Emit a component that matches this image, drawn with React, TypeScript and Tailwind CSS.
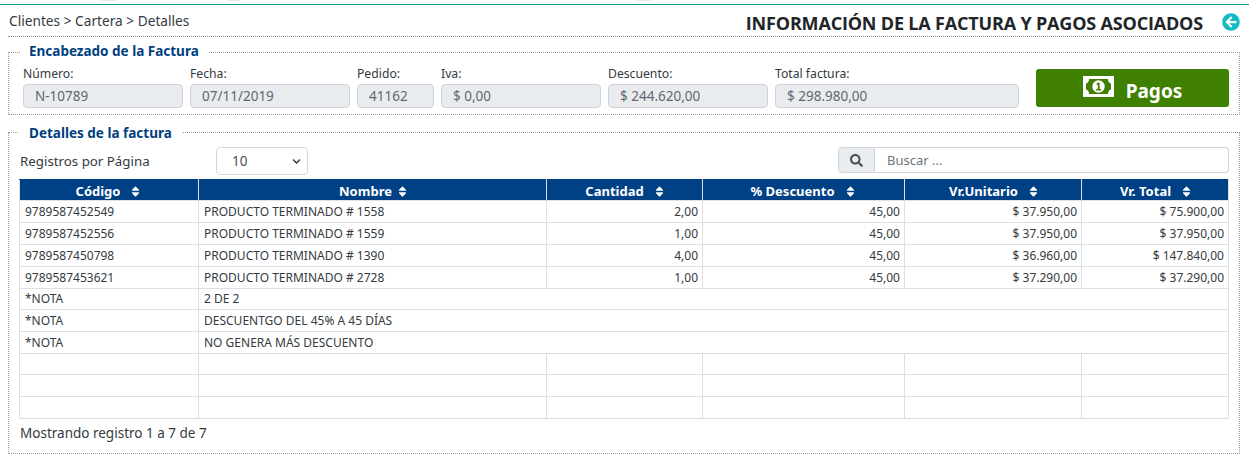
import React from "react";
import { FaSearch, FaArrowCircleLeft, FaSort, FaChevronDown } from "react-icons/fa";

const fields = [
  { label: "Número:", value: "N-10789", w: "w-[160px]" },
  { label: "Fecha:", value: "07/11/2019", w: "w-[160px]" },
  { label: "Pedido:", value: "41162", w: "w-[77px]" },
  { label: "Iva:", value: "$ 0,00", w: "w-[160px]" },
  { label: "Descuento:", value: "$ 244.620,00", w: "w-[160px]" },
  { label: "Total factura:", value: "$ 298.980,00", w: "w-[244px]" },
];

const headers = [
  { t: "Código", w: "w-[179px]", gap: "ml-[9px]", pad: "pl-[0px]" },
  { t: "Nombre", w: "w-[348px]", gap: "ml-[4px]", pad: "pl-[3px]" },
  { t: "Cantidad", w: "w-[156px]", gap: "ml-[9px]", pad: "pl-[2px]" },
  { t: "% Descuento", w: "w-[202px]", gap: "ml-[9px]", pad: "pl-[0px]" },
  { t: "Vr.Unitario", w: "w-[177px]", gap: "ml-[9px]", pad: "pl-[3px]" },
  { t: "Vr. Total", w: "w-[147px]", gap: "ml-[9px]", pad: "pl-[3px]" },
];

const rows = [
  ["9789587452549", "PRODUCTO TERMINADO # 1558", "2,00", "45,00", "$ 37.950,00", "$ 75.900,00"],
  ["9789587452556", "PRODUCTO TERMINADO # 1559", "1,00", "45,00", "$ 37.950,00", "$ 37.950,00"],
  ["9789587450798", "PRODUCTO TERMINADO # 1390", "4,00", "45,00", "$ 36.960,00", "$ 147.840,00"],
  ["9789587453621", "PRODUCTO TERMINADO # 2728", "1,00", "45,00", "$ 37.290,00", "$ 37.290,00"],
  ["*NOTA", "2 DE 2", "", "", "", ""],
  ["*NOTA", "DESCUENTGO DEL 45% A 45 DÍAS", "", "", "", ""],
  ["*NOTA", "NO GENERA MÁS DESCUENTO", "", "", "", ""],
  ["", "", "", "", "", ""],
  ["", "", "", "", "", ""],
  ["", "", "", "", "", ""],
];

const heights = ["h-[22px]", "h-[22px]", "h-[22px]", "h-[22px]", "h-[21px]", "h-[22px]", "h-[22px]", "h-[21px]", "h-[22px]", "h-[22px]"];

function BillIcon() {
  return (
    <svg width="31" height="21" viewBox="0 0 31 21" className="mr-[12px] mt-[-3px] shrink-0">
      <rect width="31" height="21" fill="#ffffff" />
      <path d="M6 3H25C25 5.5 26 7 28 7.5V13.5C26 14 25 15.5 25 18H6C6 15.5 5 14 3 13.5V7.5C5 7 6 5.5 6 3Z" fill="#408000" />
      <circle cx="15.5" cy="10.5" r="6.2" fill="#ffffff" />
      <path d="M14 6.8H16.6V13H18.2V14.6H13.2V13H14.8V8.6L13.6 9.2Z" fill="#408000" />
    </svg>
  );
}

export default function App() {
  return (
    <div className="w-[1249px] h-[466px] bg-white text-[#212529] overflow-hidden font-['Noto_Sans',sans-serif]">
      <div className="flex h-[1px]">
        <div className="ml-[102px] w-[15px] bg-[#e9ecef]" />
        <div className="ml-[110px] w-[13px] bg-[#e9ecef]" />
        <div className="ml-[398px] w-[12px] bg-[#e9ecef]" />
      </div>
      <div className="mt-[3px] h-[1px] bg-[#009e8c]" />
      <div className="ml-[8px] mr-[9px] h-[32px] flex items-center border-b border-dotted border-[#8f8f8f]">
        <span className="ml-[1px] pt-[1px] text-[13.7px] text-[#343a40]">Clientes &gt; Cartera &gt; Detalles</span>
        <h1 className="ml-auto pt-[4px] text-[18px] leading-none font-bold text-[#212529] font-['Open_Sans',sans-serif] mr-[19px] tracking-[-0.01em]">
          INFORMACIÓN DE LA FACTURA Y PAGOS ASOCIADOS
        </h1>
        <FaArrowCircleLeft className="mt-[3px] text-[18px] text-[#11bcc4] mr-[0px]" />
      </div>

      <fieldset className="ml-[8px] mr-[9px] mt-[8px] h-[70px] border border-dotted border-[#9a9a9a] pl-[14px] pr-[10px]">
        <legend className="ml-[-3px] px-[9px] text-[13.5px] font-bold leading-[14px] text-[#003f7f] -translate-y-[1px]">Encabezado de la Factura</legend>
        <div className="flex items-start mt-[6px]">
          <div className="flex gap-[7px]">
            {fields.map((f) => (
              <div key={f.label} className={f.w}>
                <div className="text-[12.2px] leading-[16px] mt-[1px] text-[#343a40]">{f.label}</div>
                <div className="mt-[2px] h-[24px] rounded-[4px] border border-[#ced4da] bg-[#e9ecef] pl-[11px] flex items-center text-[13.5px] text-[#5f6870]">
                  {f.value}
                </div>
              </div>
            ))}
          </div>
          <button className="ml-[17px] mt-[4px] w-[193px] h-[38px] rounded-[3px] bg-[#408000] flex items-center justify-center text-white text-[19px] font-bold">
            <BillIcon />
            <span className="mt-[6px] leading-none">Pagos</span>
          </button>
        </div>
      </fieldset>

      <fieldset className="ml-[8px] mr-[9px] mt-[10px] h-[329px] border border-dotted border-[#9a9a9a] pl-[10px] pr-[10px]">
        <legend className="px-[10px] text-[13.5px] font-bold leading-[14px] text-[#003f7f] translate-y-[1px]">Detalles de la factura</legend>
        <div className="flex items-start mt-[8px] h-[32px]">
          <span className="w-[196px] ml-[1px] mt-[5px] text-[13.3px] text-[#343a40]">Registros por Página</span>
          <div className="w-[92px] h-[28px] rounded-[4px] border border-[#d5d9de] flex items-center pl-[15px] pr-[6px] text-[13.5px] text-[#495057]">
            10
            <FaChevronDown className="ml-auto text-[9px] text-[#343a40]" />
          </div>
          <div className="ml-auto flex h-[26px] w-[391px]">
            <div className="w-[37px] bg-[#e9ecef] border border-[#ced4da] rounded-l-[4px] flex items-center justify-center">
              <FaSearch className="text-[13px] text-[#495057]" />
            </div>
            <div className="flex-1 border border-l-0 border-[#ced4da] rounded-r-[4px] pl-[12px] pt-[1px] flex items-center text-[13px] text-[#6c757d]">
              Buscar ...
            </div>
          </div>
        </div>
        <table className="table-fixed border-collapse w-[1209px] text-[12px]">
          <thead>
            <tr className="h-[21px] bg-[#004085] text-white">
              {headers.map((h) => (
                <th key={h.t} className={`${h.w} border border-[#dee2e6] border-t-[#004085] p-0 font-bold text-[13px] leading-none`}>
                  <span className={`inline-flex items-center justify-center pt-[2px] ${h.pad}`}>
                    {h.t}
                    <FaSort className={`${h.gap} text-[13px]`} />
                  </span>
                </th>
              ))}
            </tr>
          </thead>
          <tbody>
            {rows.map((r, i) => (
              <tr key={i} className={heights[i]}>
                {r.map((c, j) => {
                  const span = i >= 4 && i < 7 && j === 1;
                  if (i >= 4 && i < 7 && j > 1) return null;
                  return (
                    <td
                      key={j}
                      colSpan={span ? 5 : 1}
                      className={`border border-[#dbe0e6] py-0 px-[5px] text-[#343a40] ${j >= 2 ? "text-right pr-[4px]" : "text-left"}`}
                    >
                      {c}
                    </td>
                  );
                })}
              </tr>
            ))}
          </tbody>
        </table>
        <div className="mt-[4px] ml-[1px] text-[13.5px] text-[#343a40]">Mostrando registro 1 a 7 de 7</div>
      </fieldset>
    </div>
  );
}
